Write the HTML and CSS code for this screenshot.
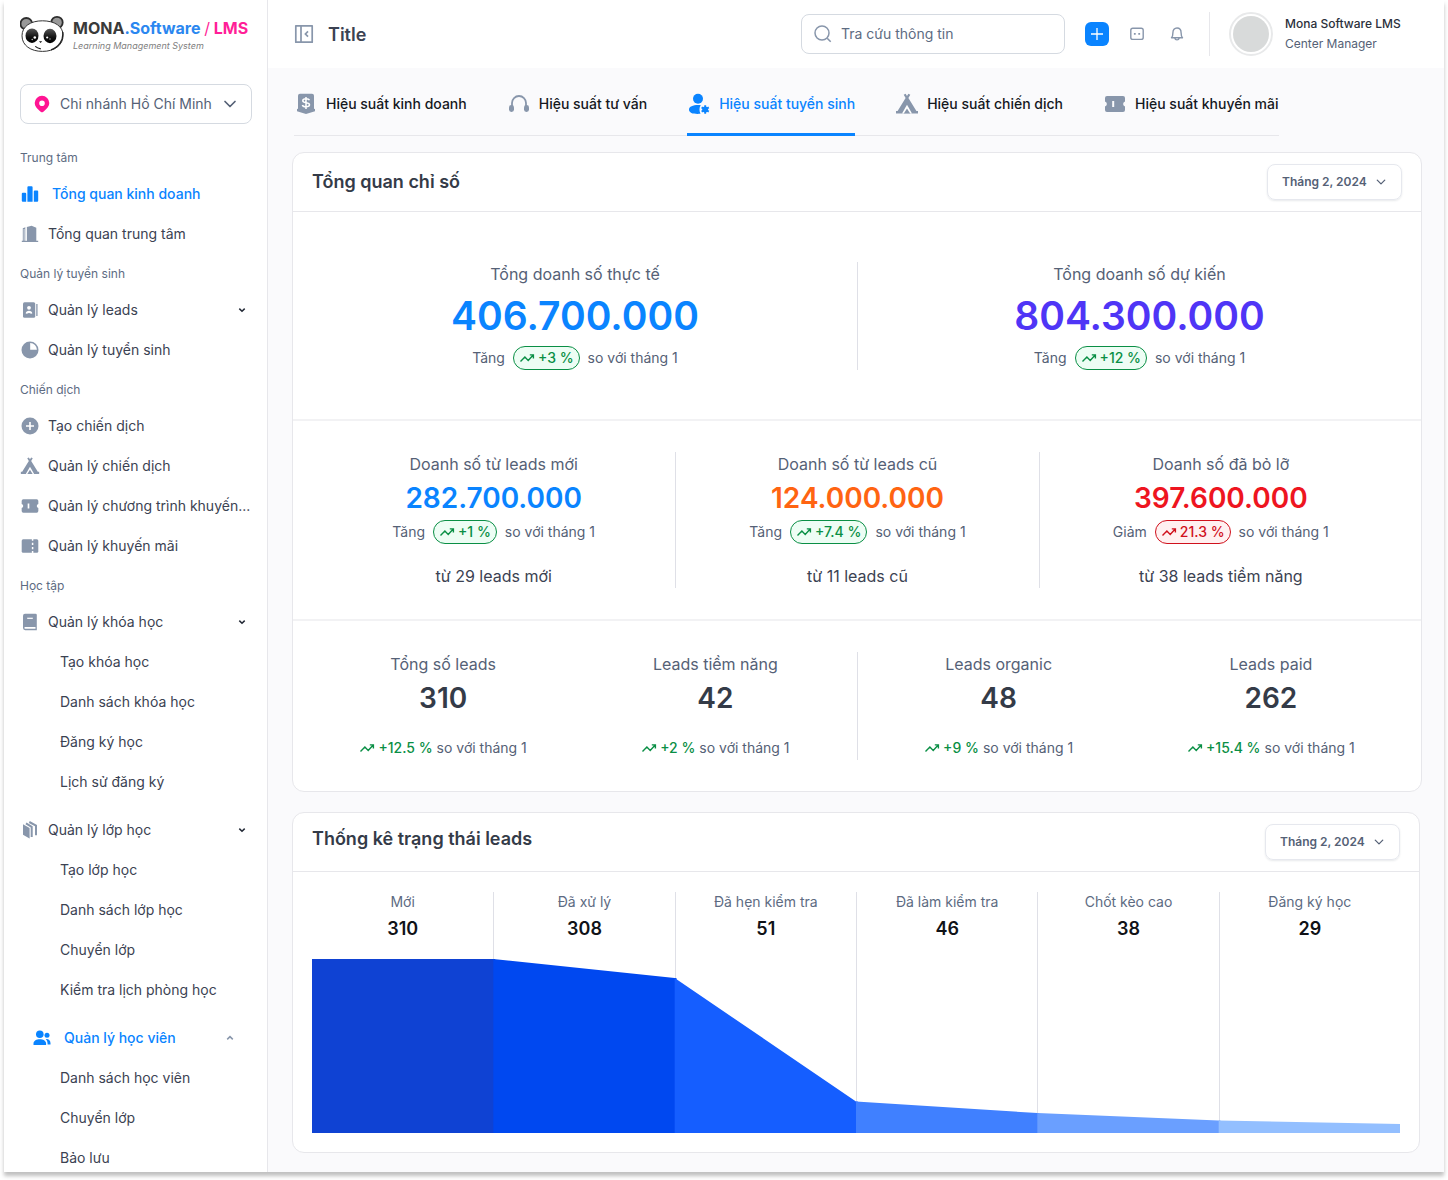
FILE: index.html
```html
<!DOCTYPE html>
<html lang="vi">
<head>
<meta charset="utf-8">
<meta name="viewport" content="width=device-width, initial-scale=1">
<title>MONA.Software / LMS</title>
<link rel="stylesheet" href="styles.css">
</head>
<body>
<svg class="sprite" aria-hidden="true">
  <symbol id="i-chevron" viewBox="0 0 16 16"><path d="M3 5.500l5 5 5-5" fill="none" stroke="currentColor" stroke-width="1.700" stroke-linecap="round" stroke-linejoin="round"/></symbol>
  <symbol id="i-caret" viewBox="0 0 20 20"><path d="M7.300 8.600L10 11.200l2.700-2.600" fill="none" stroke="currentColor" stroke-width="1.500"/></symbol>
  <symbol id="i-caret-up" viewBox="0 0 20 20"><path d="M7.200 11.400L10 8.600l2.800 2.800" fill="none" stroke="currentColor" stroke-width="1.500"/></symbol>
  <symbol id="i-trend" viewBox="0 0 16 16"><path d="M1.500 11.500l4.400-4.400 3.300 3.300 4.800-5.200M10.800 4.900h3.600v3.600" fill="none" stroke="currentColor" stroke-width="1.400"/></symbol>
  <symbol id="i-tent" viewBox="0 0 24 24"><path d="M8.700 2.800l1.900-1.100L12 4l1.400-2.300 1.900 1.100L13.400 6l8 13H23v2.500H1V19h1.600l8-13z" fill="currentColor"/><path d="M12 12.800l5 8.700H7z" fill="#fff"/><path d="M12 16.600l3.200 4.900H8.800z" fill="currentColor"/></symbol>
  <symbol id="i-ticket" viewBox="0 0 24 24"><path d="M4 4h16a2 2 0 0 1 2 2v3.500a2.600 2.600 0 0 0 0 5V18a2 2 0 0 1-2 2H4a2 2 0 0 1-2-2v-3.500a2.600 2.600 0 0 0 0-5V6a2 2 0 0 1 2-2zm5.200 5v6h2V9z" fill="currentColor" fill-rule="evenodd"/></symbol>
</svg>
<div class="app">
  <aside class="sidebar">
    <a class="brand" href="#">
      <svg class="brand-logo" viewBox="0 0 44 38" aria-hidden="true">
        <defs>
          <linearGradient id="eye" x1="0" y1="0" x2="0" y2="1"><stop offset="0" stop-color="#555"/><stop offset=".6" stop-color="#111"/><stop offset="1" stop-color="#000"/></linearGradient>
        </defs>
        <circle cx="6.300" cy="8.800" r="5.800" fill="#999" stroke="#2d2d2d" stroke-width="1.800"/>
        <circle cx="37" cy="7.500" r="5.700" fill="#999" stroke="#2d2d2d" stroke-width="1.800"/>
        <path d="M22.500 5.800c12 0 20.600 5.400 20.600 14.600 0 9.800-8.800 16-20.600 16S2 30.400 2 20.800C2 11.400 10.500 5.800 22.500 5.800z" fill="#fff" stroke="#333" stroke-width="1"/>
        <path d="M42.700 17c1 8-3.700 15-11.700 17.800" fill="none" stroke="#222" stroke-width="1.300"/>
        <ellipse cx="12" cy="20.700" rx="6.500" ry="7.200" fill="url(#eye)"/>
        <ellipse cx="30" cy="21" rx="6.500" ry="7.200" fill="url(#eye)"/>
        <circle cx="14.800" cy="22.500" r="1.300" fill="#fff"/><circle cx="12.200" cy="24.500" r=".7" fill="#ddd"/>
        <circle cx="27.200" cy="22.500" r="1.100" fill="#fff"/><circle cx="30" cy="24" r=".7" fill="#bbb"/>
        <path d="M19 26.200h3.200l-1.600 1.800z" fill="#111"/><path d="M15.300 31.400c1.600 1.400 3.200 2 5.500 2.500" fill="none" stroke="#111" stroke-width="1.200"/>
      </svg>
      <span class="brand-text">
        <span class="brand-name">MONA<span class="brand-blue">.Software</span> <span class="brand-pink"><span class="brand-slash">/</span> LMS</span></span>
        <span class="brand-tagline">Learning Management System</span>
      </span>
    </a>

    <div class="branch">
      <svg class="branch-pin" viewBox="0 0 20 20" aria-hidden="true"><path d="M10 1.800a7.300 7.300 0 0 0-7.300 7.300c0 3.400 2.300 5.700 4.800 7.600l1.500 1.200a1.600 1.600 0 0 0 2 0l1.500-1.200c2.500-1.900 4.800-4.200 4.800-7.600A7.300 7.300 0 0 0 10 1.800zm0 4.700a2.800 2.800 0 1 1 0 5.600 2.800 2.800 0 0 1 0-5.600z" fill="#ff1493" fill-rule="evenodd"/></svg>
      <select class="branch-select" aria-label="Chi nhánh"><option>Chi nhánh Hồ Chí Minh</option></select>
      <svg class="branch-chevron" aria-hidden="true"><use href="#i-chevron"/></svg>
    </div>

    <nav class="nav" aria-label="Menu chính">
      <h2 class="nav-label">Trung tâm</h2>
      <a class="nav-item nav-item-current" href="#"><svg class="nav-icon" viewBox="0 0 20 20" aria-hidden="true"><path d="M1.800 9.800q0-1 1-1h2.400q1 0 1 1v8H2.800q-1 0-1-1zM7.400 3.200q0-1 1-1h3.200q1 0 1 1v14.600H7.400zM13.800 7.500q0-1 1-1h2.400q1 0 1 1v9.300q0 1-1 1h-3.400z" fill="currentColor"/></svg>Tổng quan kinh doanh</a>
      <a class="nav-item" href="#"><svg class="nav-icon" viewBox="0 0 20 20" aria-hidden="true"><path d="M6.800 3l4.800-1.200 4.700 1.900v13h1.900v1.300H1.800v-1.300h1V4.200l2.600-1v13.500h1.400z" fill="currentColor"/><path d="M6.100 3.500v13.300M4.100 5v11.700" stroke="#fff" stroke-width=".7"/></svg>Tổng quan trung tâm</a>

      <h2 class="nav-label">Quản lý tuyển sinh</h2>
      <button class="nav-item" type="button"><svg class="nav-icon" viewBox="0 0 20 20" aria-hidden="true"><rect x="3" y="2.300" width="12.200" height="15.500" rx="1.500" fill="currentColor"/><path d="M16.900 4v12" stroke="currentColor" stroke-width="1.300"/><circle cx="9" cy="7.800" r="1.900" fill="#fff"/><path d="M5.700 13.500c0-3.800 6.600-3.800 6.600 0l-1.300.2c-1.200-.9-2.800-.9-4 0z" fill="#fff"/></svg><span class="nav-text">Quản lý leads</span><svg class="nav-caret" aria-hidden="true"><use href="#i-caret"/></svg></button>
      <a class="nav-item" href="#"><svg class="nav-icon" viewBox="0 0 20 20" aria-hidden="true"><circle cx="10" cy="10" r="8.500" fill="currentColor"/><path d="M10.200 3v6.700h6.700A6.900 6.900 0 0 0 10.200 3z" fill="#fff"/></svg>Quản lý tuyển sinh</a>

      <h2 class="nav-label">Chiến dịch</h2>
      <a class="nav-item" href="#"><svg class="nav-icon" viewBox="0 0 20 20" aria-hidden="true"><circle cx="10" cy="10" r="8.500" fill="currentColor"/><path d="M10 6v8M6 10h8" stroke="#fff" stroke-width="1.600"/></svg>Tạo chiến dịch</a>
      <a class="nav-item" href="#"><svg class="nav-icon" aria-hidden="true"><use href="#i-tent"/></svg>Quản lý chiến dịch</a>
      <a class="nav-item" href="#"><svg class="nav-icon" aria-hidden="true"><use href="#i-ticket"/></svg>Quản lý chương trình khuyến...</a>
      <a class="nav-item" href="#"><svg class="nav-icon" viewBox="0 0 20 20" aria-hidden="true"><rect x="1.700" y="3.300" width="16.600" height="13.400" rx="1.500" fill="currentColor"/><path d="M12.600 3v1.800m0 1.900v2.200m0 2.200v2.200m0 1.800V17" stroke="#fff" stroke-width="1.500"/></svg>Quản lý khuyến mãi</a>

      <h2 class="nav-label">Học tập</h2>
      <button class="nav-item" type="button"><svg class="nav-icon" viewBox="0 0 20 20" aria-hidden="true"><path d="M5 1.800h10.500q1.300 0 1.300 1.300v15.100H5.200q-2.200 0-2.200-2.100V3.800q0-2 2-2z" fill="currentColor"/><path d="M7.200 6.300h5.600" stroke="#fff" stroke-width="1.200"/><path d="M5.200 15h10.300v1.700H5.200a.85.850 0 0 1 0-1.700z" fill="#fff"/></svg><span class="nav-text">Quản lý khóa học</span><svg class="nav-caret" aria-hidden="true"><use href="#i-caret"/></svg></button>
      <ul class="subnav">
        <li><a href="#">Tạo khóa học</a></li>
        <li><a href="#">Danh sách khóa học</a></li>
        <li><a href="#">Đăng ký học</a></li>
        <li><a href="#">Lịch sử đăng ký</a></li>
      </ul>
      <button class="nav-item" type="button"><svg class="nav-icon" viewBox="0 0 20 20" aria-hidden="true"><path d="M3 4.200l6.600 3.700v10.600L3 14.700z" fill="currentColor"/><path d="M6 3.300l5.700 3.500v10.300M9.300 2l6.700 3.600v9.700" fill="none" stroke="currentColor" stroke-width="2"/></svg><span class="nav-text">Quản lý lớp học</span><svg class="nav-caret" aria-hidden="true"><use href="#i-caret"/></svg></button>
      <ul class="subnav">
        <li><a href="#">Tạo lớp học</a></li>
        <li><a href="#">Danh sách lớp học</a></li>
        <li><a href="#">Chuyển lớp</a></li>
        <li><a href="#">Kiểm tra lịch phòng học</a></li>
      </ul>
      <button class="nav-item nav-item-current nav-item-open" type="button" aria-expanded="true"><svg class="nav-icon" viewBox="0 0 20 20" aria-hidden="true"><circle cx="7.800" cy="6.300" r="3.800" fill="currentColor"/><circle cx="15" cy="7.200" r="2.500" fill="currentColor"/><path d="M1.500 15.500c0-5.800 12.600-5.800 12.600 0v1.500H1.500zM13.800 11c2.800-.4 4.700 1.500 4.700 4.200v1.300h-2.900c.1-2.200-.4-4-1.800-5.500z" fill="currentColor"/></svg><span class="nav-text">Quản lý học viên</span><svg class="nav-caret" aria-hidden="true"><use href="#i-caret-up"/></svg></button>
      <ul class="subnav">
        <li><a href="#">Danh sách học viên</a></li>
        <li><a href="#">Chuyển lớp</a></li>
        <li><a href="#">Bảo lưu</a></li>
      </ul>
    </nav>
  </aside>

  <div class="page">
    <header class="topbar">
      <button class="icon-btn" type="button" aria-label="Thu gọn menu"><svg viewBox="0 0 24 24" aria-hidden="true"><path d="M3.800 3.800h16.400v16.400H3.800zM9 4v16" fill="none" stroke="#8896ab" stroke-width="1.700" stroke-linejoin="round"/><path d="M16 9.300L13.400 12l2.600 2.700" fill="none" stroke="#8896ab" stroke-width="1.700"/></svg></button>
      <h1 class="page-title">Title</h1>
      <label class="search">
        <svg viewBox="0 0 20 20" aria-hidden="true"><circle cx="9" cy="9" r="7" fill="none" stroke="#8896ab" stroke-width="1.500"/><path d="M14.200 14.200l3.500 3.500" stroke="#8896ab" stroke-width="1.600"/></svg>
        <input type="search" placeholder="Tra cứu thông tin" aria-label="Tra cứu thông tin">
      </label>
      <div class="actions">
        <button class="icon-btn icon-btn-add" type="button" aria-label="Thêm"><svg viewBox="0 0 24 24" aria-hidden="true"><path d="M12 6v12M6 12h12" stroke="#fff" stroke-width="1.300"/></svg></button>
        <button class="icon-btn" type="button" aria-label="Tin nhắn"><svg viewBox="0 0 24 24" aria-hidden="true"><rect x="5.800" y="6.200" width="12.400" height="11.200" rx="2" fill="none" stroke="#8896ab" stroke-width="1.400"/><path d="M9.800 11v1.800M14.200 11v1.800" stroke="#8896ab" stroke-width="1.800"/></svg></button>
        <button class="icon-btn" type="button" aria-label="Thông báo"><svg viewBox="0 0 24 24" aria-hidden="true"><path d="M6.500 15.800c1.200-1.200 1.400-2.700 1.400-5 0-2.900 1.600-4.800 4.100-4.800s4.100 1.900 4.100 4.800c0 2.300.2 3.800 1.400 5zM9.900 16.400c.3 2 3.900 2 4.200 0" fill="none" stroke="#8896ab" stroke-width="1.400" stroke-linejoin="round"/></svg></button>
      </div>
      <a class="user" href="#">
        <span class="avatar"></span>
        <span class="user-info"><span class="user-name">Mona Software LMS</span><span class="user-role">Center Manager</span></span>
      </a>
    </header>

    <main class="content">
      <nav class="tabs" aria-label="Hiệu suất">
        <a class="tab" href="#"><svg viewBox="0 0 24 24" aria-hidden="true"><path d="M6 1.800h12a2 2 0 0 1 2 2v13l1 .3v2.200L12 22l-9-2.700v-2.200l1-.3v-13a2 2 0 0 1 2-2z" fill="currentColor"/><path d="M15.400 8.300c-.4-1.200-1.700-1.500-3.400-1.500s-3.200.4-3.200 2c0 2.700 6.700 1.300 6.700 4 0 1.500-1.400 2-3.500 2-1.900 0-3.300-.4-3.600-1.800M12 5v12" fill="none" stroke="#fff" stroke-width="1.500"/></svg>Hiệu suất kinh doanh</a>
        <a class="tab" href="#"><svg viewBox="0 0 24 24" aria-hidden="true"><path d="M5 14.500V11a7 7 0 0 1 14 0v3.500" fill="none" stroke="currentColor" stroke-width="1.800"/><rect x="2" y="13" width="5" height="7" rx="2.400" fill="currentColor"/><rect x="17" y="13" width="5" height="7" rx="2.400" fill="currentColor"/></svg>Hiệu suất tư vấn</a>
        <a class="tab tab-current" href="#" aria-current="page"><svg viewBox="0 0 24 24" aria-hidden="true"><circle cx="11" cy="6.800" r="5" fill="currentColor"/><path d="M2 17.500C2 14.500 6 13 11 13c1 0 1.900.1 2.800.2-1.700 2.200-1.700 5.500-.3 8.600C7 22.200 2 21.500 2 17.500z" fill="currentColor"/><circle cx="18.200" cy="17.500" r="2.900" fill="currentColor"/><path d="M18.200 13.300v8.400M14.600 15.400l7.200 4.200M21.800 15.400l-7.200 4.200" stroke="currentColor" stroke-width="1.900"/></svg>Hiệu suất tuyển sinh</a>
        <a class="tab" href="#"><svg aria-hidden="true"><use href="#i-tent"/></svg>Hiệu suất chiến dịch</a>
        <a class="tab" href="#"><svg aria-hidden="true"><use href="#i-ticket"/></svg>Hiệu suất khuyến mãi</a>
      </nav>

      <section class="card card-overview">
        <header class="card-head">
          <h2>Tổng quan chỉ số</h2>
          <div class="month"><select aria-label="Tháng"><option>Tháng 2, 2024</option></select><svg aria-hidden="true"><use href="#i-chevron"/></svg></div>
        </header>
        <div class="metrics metrics-total">
          <div class="metric">
            <h3>Tổng doanh số thực tế</h3>
            <p class="value value-blue">406.700.000</p>
            <p class="change">Tăng <span class="pill"><svg aria-hidden="true"><use href="#i-trend"/></svg>+3 %</span> so với tháng 1</p>
          </div>
          <div class="metric">
            <h3>Tổng doanh số dự kiến</h3>
            <p class="value value-violet">804.300.000</p>
            <p class="change">Tăng <span class="pill"><svg aria-hidden="true"><use href="#i-trend"/></svg>+12 %</span> so với tháng 1</p>
          </div>
        </div>
        <div class="metrics metrics-source">
          <div class="metric">
            <h3>Doanh số từ leads mới</h3>
            <p class="value value-blue">282.700.000</p>
            <p class="change">Tăng <span class="pill"><svg aria-hidden="true"><use href="#i-trend"/></svg>+1 %</span> so với tháng 1</p>
            <p class="origin">từ 29 leads mới</p>
          </div>
          <div class="metric">
            <h3>Doanh số từ leads cũ</h3>
            <p class="value value-orange">124.000.000</p>
            <p class="change">Tăng <span class="pill"><svg aria-hidden="true"><use href="#i-trend"/></svg>+7.4 %</span> so với tháng 1</p>
            <p class="origin">từ 11 leads cũ</p>
          </div>
          <div class="metric">
            <h3>Doanh số đã bỏ lỡ</h3>
            <p class="value value-red">397.600.000</p>
            <p class="change">Giảm <span class="pill pill-down"><svg aria-hidden="true"><use href="#i-trend"/></svg>21.3 %</span> so với tháng 1</p>
            <p class="origin">từ 38 leads tiềm năng</p>
          </div>
        </div>
        <div class="metrics metrics-leads">
          <div class="metric">
            <h3>Tổng số leads</h3>
            <p class="value">310</p>
            <p class="change"><span class="rise"><svg aria-hidden="true"><use href="#i-trend"/></svg>+12.5 %</span> so với tháng 1</p>
          </div>
          <div class="metric">
            <h3>Leads tiềm năng</h3>
            <p class="value">42</p>
            <p class="change"><span class="rise"><svg aria-hidden="true"><use href="#i-trend"/></svg>+2 %</span> so với tháng 1</p>
          </div>
          <div class="rule"></div>
          <div class="metric">
            <h3>Leads organic</h3>
            <p class="value">48</p>
            <p class="change"><span class="rise"><svg aria-hidden="true"><use href="#i-trend"/></svg>+9 %</span> so với tháng 1</p>
          </div>
          <div class="metric">
            <h3>Leads paid</h3>
            <p class="value">262</p>
            <p class="change"><span class="rise"><svg aria-hidden="true"><use href="#i-trend"/></svg>+15.4 %</span> so với tháng 1</p>
          </div>
        </div>
      </section>

      <section class="card card-status">
        <header class="card-head">
          <h2>Thống kê trạng thái leads</h2>
          <div class="month"><select aria-label="Tháng"><option>Tháng 2, 2024</option></select><svg aria-hidden="true"><use href="#i-chevron"/></svg></div>
        </header>
        <div class="funnel">
          <ol class="stages">
            <li><span>Mới</span><strong>310</strong></li>
            <li><span>Đã xử lý</span><strong>308</strong></li>
            <li><span>Đã hẹn kiểm tra</span><strong>51</strong></li>
            <li><span>Đã làm kiểm tra</span><strong>46</strong></li>
            <li><span>Chốt kèo cao</span><strong>38</strong></li>
            <li><span>Đăng ký học</span><strong>29</strong></li>
          </ol>
          <svg class="funnel-chart" viewBox="0 0 600 174" preserveAspectRatio="none" role="img" aria-label="Biểu đồ trạng thái leads">
            <path d="M0 0H101V174H0z" fill="#0f42d3"/>
            <path d="M100 0L200 19H201V174H100z" fill="#0048f0"/>
            <path d="M200 19L300 142.500H301V174H200z" fill="#155eff"/>
            <path d="M300 142.500L400 154H401V174H300z" fill="#4080ff"/>
            <path d="M400 154L500 161.500H501V174H400z" fill="#6a9fff"/>
            <path d="M500 161.500L600 165V174H500z" fill="#93bfff"/>
          </svg>
        </div>
      </section>
    </main>
  </div>
</div>
</body>
</html>
```
FILE: styles.css
```css
:root {
  --blue: #0a84ff;
  --slate: #8896ab;
  --text: #3b4252;
  --muted: #556176;
  --line: #e7e7eb;
  --green: #0a8f45;
}

* { box-sizing: border-box; }

body {
  margin: 0;
  padding: 0 4px 8px;
  background: #fff;
  font-family: Inter, "Noto Sans", sans-serif;
  font-size: 14px;
  line-height: 24px;
  color: var(--text);
}

h1, h2, h3, p, ul, ol { margin: 0; padding: 0; }
ul, ol { list-style: none; }
a { color: inherit; text-decoration: none; }
button, input, select { font: inherit; color: inherit; border: 0; background: none; padding: 0; margin: 0; }
button { cursor: pointer; }
select { appearance: none; }
svg { display: block; flex: none; }
.sprite { display: none; }

.app {
  display: flex;
  height: calc(100vh - 8px);
  background: #fafafc;
  box-shadow: 0 4px 4px rgba(0, 0, 0, .25);
}

/* Sidebar */
.sidebar {
  flex: none;
  width: 264px;
  padding: 12px 15px 0 16px;
  border-right: 1px solid var(--line);
  background: #fff;
  overflow-y: auto;
  scrollbar-width: none;
}
.brand { display: flex; align-items: center; gap: 9px; height: 44px; white-space: nowrap; }
.brand-logo { width: 44px; height: 38px; }
.brand-text { display: flex; flex-direction: column; padding-top: 4px; }
.brand-name { font-size: 16px; line-height: 20px; font-weight: 700; color: #3a3a3a; }
.brand-blue { color: #2b87f0; }
.brand-pink { color: #ff1f98; }
.brand-slash { font-weight: 400; }
.brand-tagline { font-size: 9px; line-height: 16px; font-style: italic; color: #808080; }

.branch {
  display: grid;
  grid-template-columns: 12px 20px 1fr 16px 14px;
  align-items: center;
  height: 40px;
  margin: 28px 0 14px;
}
.branch > * { grid-row: 1; }
.branch svg { pointer-events: none; z-index: 1; }
.branch-pin { grid-column: 2; width: 20px; height: 20px; }
.branch-select {
  grid-column: 1 / -1;
  height: 40px;
  padding: 0 30px 0 39px;
  border: 1px solid #d5dae1;
  border-radius: 8px;
  color: var(--muted);
}
.branch-chevron { grid-column: 4; width: 16px; height: 16px; color: var(--muted); }

.nav-label { padding: 12px 0 8px; font-size: 12px; line-height: 16px; font-weight: 400; color: #5d6b82; }
.nav-item {
  display: flex;
  align-items: center;
  gap: 8px;
  width: 100%;
  height: 40px;
  text-align: left;
  white-space: nowrap;
}
.nav-icon { width: 20px; height: 20px; color: var(--slate); }
.nav-text { flex: 1; }
.nav-caret { width: 20px; height: 20px; color: #232936; }
.nav-item-current { gap: 12px; font-weight: 500; color: var(--blue); }
.nav-item-current .nav-icon { color: var(--blue); }
.nav-item-open { padding: 0 12px; }
.nav-item-open .nav-caret { color: var(--slate); }
.subnav { margin-bottom: 8px; }
.subnav a { display: block; padding: 8px 0 8px 40px; }

/* Top bar */
.page { flex: 1; min-width: 0; display: flex; flex-direction: column; }
.topbar {
  display: flex;
  align-items: center;
  height: 68px;
  padding: 0 24px;
  background: #fff;
}
.icon-btn { width: 24px; height: 24px; border-radius: 6px; }
.icon-btn svg { width: 24px; height: 24px; }
.icon-btn-add { background: var(--blue); }
.page-title { margin: 0 auto 0 12px; padding-top: 2px; font-size: 18px; font-weight: 600; }
.search {
  display: flex;
  align-items: center;
  gap: 8px;
  width: 264px;
  height: 40px;
  padding: 0 11px;
  border: 1px solid #d5dae1;
  border-radius: 8px;
}
.search svg { width: 20px; height: 20px; }
.search input { flex: 1; min-width: 0; outline: 0; }
.search input::placeholder { color: #5d6b82; opacity: 1; }
.actions { display: flex; gap: 16px; padding: 10px 20px; }
.user {
  display: flex;
  align-items: center;
  gap: 12px;
  padding-left: 19px;
  border-left: 1px solid var(--line);
  font-size: 12px;
  line-height: 20px;
}
.avatar { width: 44px; height: 44px; padding: 2px; border: 2px solid #e8e9ea; border-radius: 50%; background: #d8dada content-box; }
.user-info { display: flex; flex-direction: column; width: 135px; }
.user-name { font-weight: 500; color: #2b303b; }
.user-role { color: var(--muted); }

/* Tabs */
.content { flex: 1; min-height: 0; overflow-y: auto; scrollbar-width: none; padding: 0 22px 16px 24px; }
.tabs {
  display: flex;
  gap: 40px;
  width: fit-content;
  height: 68px;
  margin: 0 0 16px 2px;
  border-bottom: 1px solid var(--line);
  white-space: nowrap;
}
.tab {
  display: flex;
  align-items: center;
  gap: 8px;
  height: 68px;
  padding-top: 7px;
  border-bottom: 3px solid transparent;
  font-weight: 500;
  color: #15181e;
}
.tab svg { width: 24px; height: 24px; color: var(--slate); }
.tab-current { border-color: var(--blue); color: var(--blue); }
.tab-current svg { color: var(--blue); }

/* Cards */
.card { border: 1px solid var(--line); border-radius: 12px; background: #fff; }
.card-head {
  display: flex;
  align-items: center;
  justify-content: space-between;
  padding: 11px 19px;
  border-bottom: 1px solid var(--line);
}
.card-head h2 { font-size: 18px; line-height: 30px; font-weight: 600; color: #343b48; }
.card-status { margin: 20px 2px 0 0; }
.card-status h2 { align-self: flex-start; }

.month { display: grid; grid-template-columns: 1fr 12px 15px; align-items: center; width: 135px; }
.month > * { grid-row: 1; }
.month select {
  grid-column: 1 / -1;
  height: 36px;
  padding: 0 28px 0 14px;
  border: 1px solid #e6e8ee;
  border-radius: 8px;
  box-shadow: 0 1px 2px rgba(60, 70, 90, .12);
  font-size: 12px;
  font-weight: 600;
  color: var(--muted);
}
.month svg { grid-column: 2; width: 12px; height: 12px; color: var(--muted); pointer-events: none; z-index: 1; }

/* Metrics */
.metrics { display: grid; text-align: center; }
.metrics + .metrics { border-top: 2px solid #f2f2f4; }
.metric + .metric { border-left: 1px solid #dfe0e7; }
.metric h3 { font-size: 16px; line-height: 24px; font-weight: 400; color: var(--muted); }
.value { font-size: 28px; line-height: 44px; font-weight: 600; color: #343b48; }
.value-blue { color: var(--blue); }
.value-violet { color: #4f35f6; }
.value-orange { color: #ff6412; }
.value-red { color: #ee1520; }
.change { display: flex; justify-content: center; align-items: center; gap: 8px; color: var(--muted); }
.pill, .rise { display: flex; align-items: center; gap: 3px; font-weight: 500; color: var(--green); }
.pill {
  height: 24px;
  padding: 0 5px;
  border: 1px solid currentColor;
  border-radius: 12px;
  background: #edfdf4;
}
.pill svg, .rise svg { width: 16px; height: 16px; }
.pill-down { color: #d0101c; background: #fff0f0; }
.origin { margin-top: 20px; font-size: 16px; }

.metrics-total { grid-template-columns: 1fr 1fr; padding: 50px 0 49px; }
.metrics-total .value { font-size: 39px; line-height: 60px; }
.metrics-source { grid-template-columns: repeat(3, 1fr); padding: 31px 19px; }
.metrics-leads { grid-template-columns: 1fr 1fr 11px 1fr 1fr; padding: 31px 14px; }
.metrics-leads .metric { border: 0; }
.metrics-leads .change { margin-top: 16px; gap: 4px; }
.rule { justify-self: center; width: 1px; background: #dfe0e7; }

/* Lead status funnel */
.funnel { display: grid; padding: 20px 19px 19px; }
.stages, .funnel-chart { grid-area: 1 / 1; }
.stages { display: grid; grid-template-columns: repeat(6, 1fr); min-height: 241px; text-align: center; }
.stages li { display: flex; flex-direction: column; gap: 4px; }
.stages li + li { border-left: 1px solid #dfe0e7; }
.stages span { line-height: 20px; color: #5d6b82; }
.stages strong { font-size: 18px; line-height: 26px; font-weight: 600; color: #101217; }
.funnel-chart { align-self: end; width: 100%; height: 174px; }
```
